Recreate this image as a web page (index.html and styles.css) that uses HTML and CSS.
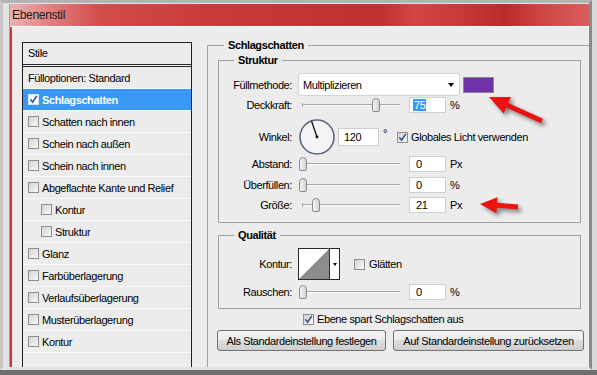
FILE: index.html
```html
<!DOCTYPE html>
<html lang="de">
<head>
<meta charset="utf-8">
<title>Ebenenstil</title>
<link rel="stylesheet" href="styles.css">
</head>
<body>
<div class="shot">
  <div class="window">
    <div class="dlg">
      <div class="titlebar">Ebenenstil</div>
      <div class="dlg-body">
        <div class="styles">
          <div class="styles-head">Stile</div>
          <div class="srow">Fülloptionen: Standard</div>
          <div class="srow sel"><span class="cb"><svg width="9" height="9" viewBox="0 0 9 9"><path d="M1.3 4.3 L3.6 7.2 L7.8 0.9" fill="none" stroke="#3a4f8f" stroke-width="1.6"/></svg></span>Schlagschatten</div>
          <div class="srow"><span class="cb"></span>Schatten nach innen</div>
          <div class="srow"><span class="cb"></span>Schein nach außen</div>
          <div class="srow"><span class="cb"></span>Schein nach innen</div>
          <div class="srow"><span class="cb"></span>Abgeflachte Kante und Relief</div>
          <div class="srow sub"><span class="cb"></span>Kontur</div>
          <div class="srow sub"><span class="cb"></span>Struktur</div>
          <div class="srow"><span class="cb"></span>Glanz</div>
          <div class="srow"><span class="cb"></span>Farbüberlagerung</div>
          <div class="srow"><span class="cb"></span>Verlaufsüberlagerung</div>
          <div class="srow"><span class="cb"></span>Musterüberlagerung</div>
          <div class="srow"><span class="cb"></span>Kontur</div>
          <div class="srow"></div>
        </div>

        <fieldset class="grp outer">
          <legend>Schlagschatten</legend>
          <div class="outer-in">
            <fieldset class="grp">
              <legend>Struktur</legend>
              <div class="struct-in">
                <div class="row r-fill">
                  <span class="lbl">Füllmethode:</span>
                  <div class="select">Multiplizieren<span class="dd"></span></div>
                  <span class="swatch"></span>
                </div>
                <div class="row r-op">
                  <span class="lbl">Deckkraft:</span>
                  <div class="slider"><span class="track"></span><span class="thumb" style="left:74px"></span></div>
                  <div class="input sel-text"><span class="hl">75</span></div>
                  <span class="unit">%</span>
                </div>
                <div class="row r-angle">
                  <span class="lbl">Winkel:</span>
                  <svg class="dial" width="38" height="38" viewBox="0 0 38 38">
                    <circle cx="19" cy="19" r="17" fill="#f4f4f4" stroke="#55627f" stroke-width="1.5"/>
                    <line x1="19" y1="19" x2="13.5" y2="3" stroke="#111" stroke-width="1.3"/>
                    <circle cx="19" cy="19" r="1.4" fill="#111"/>
                  </svg>
                  <div class="input angle-in">120</div>
                  <span class="deg">°</span>
                  <span class="cb"><svg width="9" height="9" viewBox="0 0 9 9"><path d="M1.3 4.3 L3.6 7.2 L7.8 0.9" fill="none" stroke="#3a4f8f" stroke-width="1.6"/></svg></span>
                  <span class="cb-text">Globales Licht verwenden</span>
                </div>
                <div class="row">
                  <span class="lbl">Abstand:</span>
                  <div class="slider"><span class="track"></span><span class="thumb" style="left:1px"></span></div>
                  <div class="input">0</div>
                  <span class="unit">Px</span>
                </div>
                <div class="row r-over">
                  <span class="lbl">Überfüllen:</span>
                  <div class="slider"><span class="track"></span><span class="thumb" style="left:1px"></span></div>
                  <div class="input">0</div>
                  <span class="unit">%</span>
                </div>
                <div class="row r-size">
                  <span class="lbl">Größe:</span>
                  <div class="slider"><span class="track"></span><span class="thumb" style="left:14px"></span></div>
                  <div class="input">21</div>
                  <span class="unit">Px</span>
                </div>
              </div>
            </fieldset>

            <fieldset class="grp qual">
              <legend>Qualität</legend>
              <div class="qual-in">
                <div class="row r-contour">
                  <span class="lbl">Kontur:</span>
                  <div class="contour">
                    <svg width="30" height="30" viewBox="0 0 30 30"><polygon points="0,30 30,0 30,30" fill="#8d8d8d"/></svg>
                    <span class="cdd"><span class="dd small"></span></span>
                  </div>
                  <span class="cb"></span>
                  <span class="cb-text">Glätten</span>
                </div>
                <div class="row r-noise">
                  <span class="lbl">Rauschen:</span>
                  <div class="slider"><span class="track"></span><span class="thumb" style="left:1px"></span></div>
                  <div class="input">0</div>
                  <span class="unit">%</span>
                </div>
              </div>
            </fieldset>

            <div class="knock">
              <span class="cb"><svg width="9" height="9" viewBox="0 0 9 9"><path d="M1.3 4.3 L3.6 7.2 L7.8 0.9" fill="none" stroke="#3a4f8f" stroke-width="1.6"/></svg></span>
              <span class="cb-text">Ebene spart Schlagschatten aus</span>
            </div>

            <div class="buttons">
              <div class="btn btn-a">Als Standardeinstellung festlegen</div>
              <div class="btn btn-b">Auf Standardeinstellung zurücksetzen</div>
            </div>
          </div>
        </fieldset>
      </div>
    </div>
  </div>
  <div class="ground"></div>

  <svg class="arrows" width="597" height="375" viewBox="0 0 597 375">
    <polygon points="489,97 511,97.1 508.3,103 543,118.7 541,123.3 506.3,107.6 503.6,113.5" fill="#ec1212"/>
    <polygon points="480,204 497.6,197.3 497.2,202.8 518.2,204.5 517.8,209.5 496.8,207.8 496.4,213.3" fill="#ec1212"/>
  </svg>
</div>
</body>
</html>
```

FILE: styles.css
```css
body {
  margin: 0;
  font-family: "Liberation Sans", Arial, sans-serif;
  font-size: 11px;
  letter-spacing: -0.4px;
  color: #000;
}

.shot {
  position: relative;
  width: 597px;
  height: 375px;
  overflow: hidden;
  background: #d9d9d9;
}

.window {
  box-sizing: border-box;
  width: 592px;
  height: 370px;
  border-top: 3px solid #b4b4b4;
  border-left: 3px solid #c6c6c6;
  border-right: 3px solid #8a8a8a;
  border-bottom: 3px solid #e3e3e3;
  background: #e3e3e3;
  padding: 1px 0 0 6px;
  display: flex;
}

.ground {
  height: 5px;
  background: #6f6f6f;
}

.dlg {
  flex: 1;
  min-width: 0;
  display: flex;
  flex-direction: column;
  border-left: 1px solid #9d9d9d;
}

.titlebar {
  height: 22px;
  line-height: 22px;
  border-bottom: 1px solid #fff;
  padding-left: 2px;
  font-size: 12px;
  letter-spacing: -0.3px;
  color: #1c1c1c;
  background: linear-gradient(90deg, #eab2b2 0px, #e28080 40px, #d34c4c 90px, #c93b3b 200px, #c03030 370px, #d34646 405px, #c83a3a 450px, #ba2a2a 495px, #cf4444 530px, #d95e5e 579px);
}

.dlg-body {
  flex: 1;
  min-height: 0;
  display: flex;
  border-left: 2px solid #c63b3b;
  background: #ececec;
  padding: 11px 0 0 10px;
  overflow: hidden;
}

/* ---------- styles list ---------- */
.styles {
  flex: none;
  width: 170px;
  box-sizing: border-box;
  border: 1px solid #202020;
  border-bottom: 0;
  margin-top: 4px;
  margin-right: 15px;
  overflow: hidden;
}

.styles-head {
  height: 21px;
  line-height: 21px;
  padding-left: 5px;
  border-bottom: 3px double #2a2a2a;
}

.srow {
  height: 21px;
  border-bottom: 1px solid #fafafa;
  display: flex;
  align-items: center;
  padding-left: 5px;
  white-space: nowrap;
}

.srow.sub {
  padding-left: 18px;
}

.srow.sel {
  background: #3a98f4;
  color: #fff;
  font-weight: bold;
}

.cb {
  flex: none;
  width: 11px;
  height: 11px;
  box-sizing: border-box;
  border: 1px solid #8e8e8e;
  background: linear-gradient(135deg, #d4d4d4, #f8f8f8);
  margin-right: 3px;
  display: inline-flex;
}

.cb svg {
  display: block;
}

.sel .cb {
  background: #fff;
  border-color: #d6e2f2;
}

/* ---------- group boxes ---------- */
fieldset.grp {
  margin: 0;
  padding: 0;
  border: 1px solid #a0a0a0;
  min-width: 0;
}

.grp > legend {
  padding: 0 4px;
  margin-left: 15px;
  font-weight: bold;
  line-height: 14px;
}

.grp.outer {
  flex: 1;
  border-right: 0;
  border-bottom: 0;
}

.grp.outer > legend {
  margin-left: 16px;
}

.outer-in {
  padding: 1px 8px 0 10px;
}

.struct-in {
  padding: 6px 0 9px;
}

.grp.qual {
  margin-top: 5px;
}

.qual-in {
  padding: 6px 0 8px;
}

/* ---------- rows ---------- */
.row {
  display: flex;
  align-items: center;
  height: 16px;
  white-space: nowrap;
}

.lbl {
  flex: none;
  width: 73px;
  text-align: right;
  margin-right: 6px;
}

.r-fill { height: 23px; }
.r-op { margin-top: 1px; }
.r-angle { height: 38px; margin-top: 5px; }
.r-over { margin-top: 5px; }
.r-size { margin-top: 4px; }
.r-contour { height: 32px; }
.r-noise { margin-top: 4px; }

.select {
  flex: none;
  width: 162px;
  height: 23px;
  box-sizing: border-box;
  border: 1px solid #d4d4d4;
  border-radius: 2px;
  background: #fff;
  display: flex;
  align-items: center;
  justify-content: space-between;
  padding: 0 5px 0 4px;
  margin-right: 3px;
}

.dd {
  width: 0;
  height: 0;
  border-left: 3.5px solid transparent;
  border-right: 3.5px solid transparent;
  border-top: 4px solid #000;
}

.dd.small {
  border-left-width: 2.5px;
  border-right-width: 2.5px;
  border-top-width: 3px;
}

.swatch {
  flex: none;
  width: 31px;
  height: 16px;
  box-sizing: border-box;
  border: 1px solid #8a8a8a;
  background: #7131aa;
}

.slider {
  flex: none;
  position: relative;
  width: 104px;
  height: 16px;
  margin-right: 7px;
}

.track {
  position: absolute;
  left: 4px;
  right: 2px;
  top: 7px;
  border-top: 1px solid #a6a6a6;
  border-bottom: 1px solid #fdfdfd;
}

.track::before {
  content: "";
  position: absolute;
  left: 0;
  top: -2px;
  width: 1px;
  height: 4px;
  background: #a6a6a6;
}

.thumb {
  position: absolute;
  top: 1px;
  width: 8px;
  height: 14px;
  box-sizing: border-box;
  border: 1px solid #8a8a8a;
  border-radius: 4px 4px 2px 2px;
  background: linear-gradient(90deg, #f6f6f6, #d2d2d2);
}

.input {
  flex: none;
  width: 37px;
  height: 16px;
  box-sizing: border-box;
  border: 1px solid #cfcfcf;
  background: #fff;
  padding-left: 6px;
  display: flex;
  align-items: center;
  margin-right: 4px;
}

.input.sel-text {
  padding-left: 3px;
}

.hl {
  background: #3399ff;
  color: #fff;
  padding: 0 1px;
}

.dial {
  flex: none;
  display: block;
}

.input.angle-in {
  width: 41px;
  height: 18px;
  padding-left: 5px;
  margin-left: 2px;
  margin-right: 4px;
}

.deg {
  flex: none;
  width: 14px;
  margin-bottom: 8px;
}

.cb-text {
  margin-left: 0;
}

.contour {
  flex: none;
  display: flex;
  width: 42px;
  height: 32px;
  box-sizing: border-box;
  border: 1px solid #2a2a2a;
  background: #fff;
  margin-right: 14px;
}

.contour svg {
  display: block;
}

.cdd {
  flex: 1;
  border-left: 1px solid #2a2a2a;
  display: flex;
  align-items: center;
  justify-content: center;
}

.r-contour .cb {
  margin-right: 4px;
}

.knock {
  display: flex;
  align-items: center;
  height: 16px;
  margin-top: 2px;
  padding-left: 85px;
  white-space: nowrap;
}

.buttons {
  display: flex;
  gap: 7px;
  margin: 3px 0 0 -1px;
}

.btn {
  flex: none;
  height: 21px;
  box-sizing: border-box;
  border: 1px solid #707070;
  border-radius: 3px;
  background: linear-gradient(#f3f3f3, #ebebeb 50%, #dddddd 50%, #cfcfcf);
  display: flex;
  align-items: center;
  justify-content: center;
  white-space: nowrap;
}

.btn-a { width: 169px; }
.btn-b { width: 191px; }

/* ---------- annotation arrows (overlay) ---------- */
.arrows {
  position: absolute;
  left: 0;
  top: 0;
  pointer-events: none;
  filter: drop-shadow(3px 3px 2px rgba(0, 0, 0, 0.45));
}
```
